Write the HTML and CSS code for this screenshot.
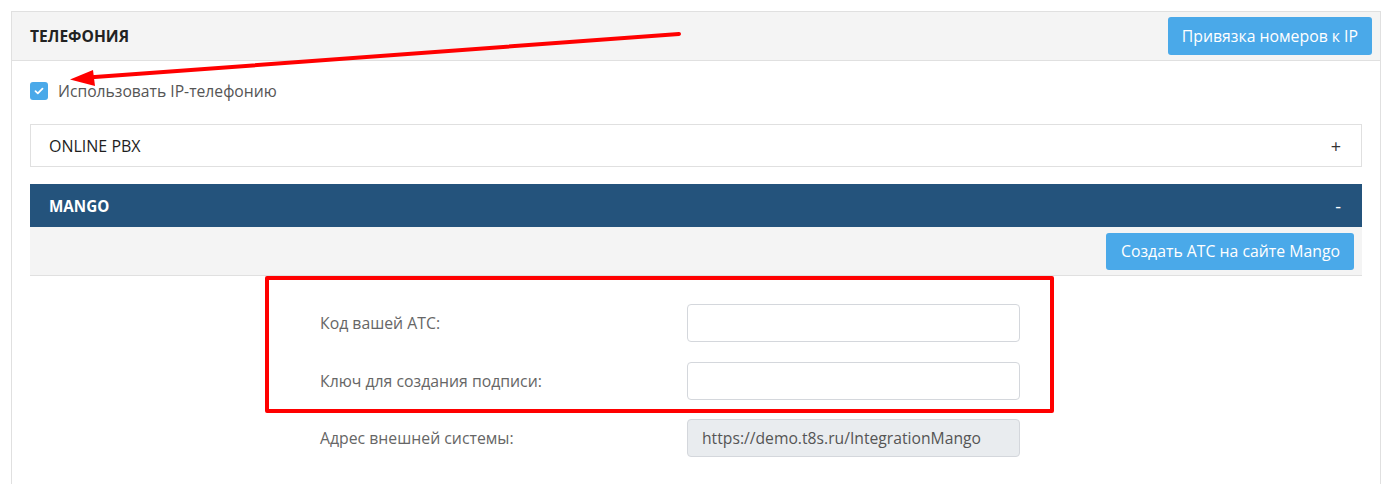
FILE: index.html
```html
<!DOCTYPE html>
<html lang="ru">
<head>
<meta charset="utf-8">
<link rel="stylesheet" href="styles.css">
</head>
<body>
<div class="page">
  <div class="panel">
    <div class="panel-head">
      <div class="panel-title">ТЕЛЕФОНИЯ</div>
      <button class="btn">Привязка номеров к IP</button>
    </div>
    <div class="panel-body">
      <label class="check-row">
        <span class="checkbox">
          <svg width="10" height="8" viewBox="0 0 10 8"><path d="M1.5 4.2 L3.8 6.3 L8.5 1.6" fill="none" stroke="#fff" stroke-width="1.8" stroke-linecap="round" stroke-linejoin="round"/></svg>
        </span>
        <span class="check-label">Использовать IP-телефонию</span>
      </label>

      <div class="acc">
        <div class="acc-head">
          <span class="acc-title">ONLINE PBX</span>
          <span class="acc-sign">+</span>
        </div>
      </div>

      <div class="acc acc-open">
        <div class="acc-head dark">
          <span class="acc-title">MANGO</span>
          <span class="acc-sign">-</span>
        </div>
        <div class="acc-tools">
          <button class="btn btn-sm">Создать АТС на сайте Mango</button>
        </div>
        <div class="form">
          <div class="form-row">
            <div class="form-label">Код вашей АТС:</div>
            <input class="form-input" type="text">
          </div>
          <div class="form-row">
            <div class="form-label">Ключ для создания подписи:</div>
            <input class="form-input" type="text">
          </div>
          <div class="form-row">
            <div class="form-label">Адрес внешней системы:</div>
            <input class="form-input readonly" type="text" value="https://demo.t8s.ru/IntegrationMango" readonly>
          </div>
          <div class="highlight"></div>
        </div>
      </div>
    </div>
  </div>
  <svg class="arrow" width="1389" height="120" viewBox="0 0 1389 120">
    <line x1="679" y1="34" x2="88" y2="77.5" stroke="#ff0000" stroke-width="4" stroke-linecap="round"/>
    <path d="M70 79.5 L93 70 L95 86 Z" fill="#ff0000"/>
  </svg>
</div>
</body>
</html>
```

FILE: styles.css
```css
html, body {
  margin: 0;
  padding: 0;
  background: #ffffff;
}
body {
  font-family: "Open Sans", "Liberation Sans", sans-serif;
  color: #333;
}
.page {
  position: relative;
  padding: 11px 0 0 11px;
  height: 473px;
  overflow: hidden;
}
.panel {
  width: 1368px;
  border: 1px solid #e0e0e0;
  height: 520px;
}
.panel-head {
  height: 48px;
  background: #f4f4f4;
  border-bottom: 1px solid #e0e0e0;
  display: flex;
  align-items: center;
  justify-content: space-between;
  padding: 0 8px 0 18px;
}
.panel-title {
  font-size: 15.6px;
  font-weight: 700;
  color: #222;
}
.btn {
  font-family: "Open Sans", "Liberation Sans", sans-serif;
  background: #4aa9e9;
  color: #fff;
  border: none;
  border-radius: 3px;
  height: 38px;
  padding: 0 14px;
  font-size: 15.8px;
  cursor: pointer;
}
.btn-sm {
  height: 37px;
  padding: 0 14px 0 15px;
  font-size: 15.8px;
}
.panel-body {
  padding: 21px 18px 0 18px;
}
.check-row {
  display: flex;
  align-items: center;
  gap: 10px;
  height: 18px;
}
.checkbox {
  width: 18px;
  height: 18px;
  border-radius: 3px;
  background: #4aa9e9;
  display: flex;
  align-items: center;
  justify-content: center;
}
.check-label {
  font-size: 15.7px;
  color: #555;
}
.acc {
  margin-top: 24px;
}
.acc + .acc {
  margin-top: 17px;
}
.acc-head {
  height: 41px;
  border: 1px solid #e0e0e0;
  display: flex;
  align-items: center;
  justify-content: space-between;
  padding: 0 18px;
}
.acc-head.dark {
  height: 43px;
  border: none;
  background: #24537c;
  color: #fff;
  padding: 0 19px 0 19px;
}
.acc-title {
  font-size: 16px;
  font-weight: 400;
  color: #1e1e1e;
}
.dark .acc-title {
  color: #fff;
  font-weight: 700;
  font-size: 15.2px;
}
.acc-sign {
  font-size: 18px;
  color: #333;
  padding-right: 2px;
}
.dark .acc-sign {
  color: #fff;
}
.acc-tools {
  height: 48px;
  background: #f4f4f4;
  border-bottom: 1px solid #e0e0e0;
  display: flex;
  align-items: center;
  justify-content: flex-end;
  padding: 0 8px;
}
.form {
  position: relative;
  padding: 28px 0 0 290px;
  display: flex;
  flex-direction: column;
  gap: 19.5px;
}
.form-row {
  display: flex;
  align-items: center;
  height: 38px;
}
.form-label {
  width: 367px;
  font-size: 15.8px;
  color: #666;
}
.form-input {
  box-sizing: border-box;
  width: 333px;
  height: 38px;
  border: 1px solid #d4d7dc;
  border-radius: 4px;
  padding: 0 14px;
  font-family: "Open Sans", "Liberation Sans", sans-serif;
  font-size: 15.7px;
  color: #555;
  background: #fff;
  outline: none;
}
.form-input.readonly {
  background: #e9ecef;
}
.highlight {
  position: absolute;
  left: 235px;
  top: 0;
  width: 781px;
  height: 129px;
  border: 4px solid #ff0000;
  border-radius: 2px;
  pointer-events: none;
}
.arrow {
  position: absolute;
  left: 0;
  top: 0;
  pointer-events: none;
}
```
